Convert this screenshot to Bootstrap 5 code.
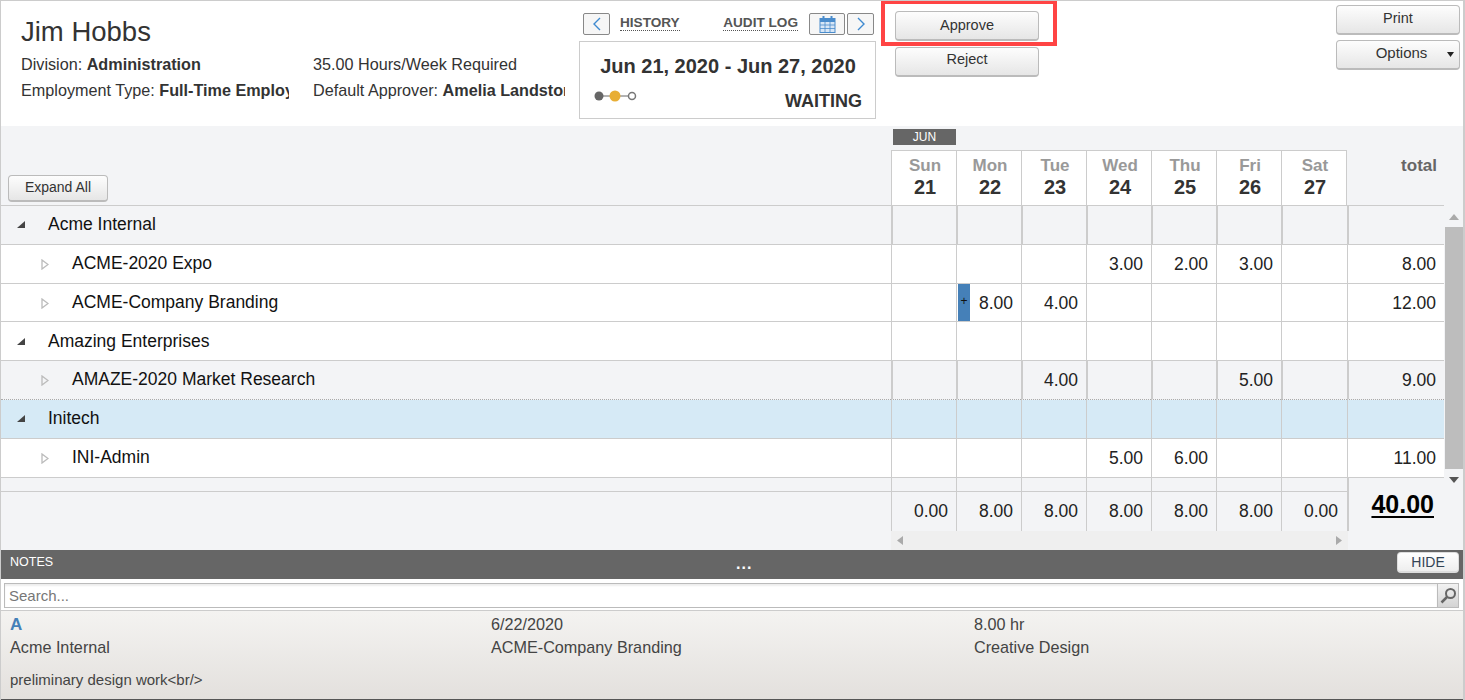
<!DOCTYPE html>
<html lang="en">
<head>
<meta charset="UTF-8" />
<title>Timesheet Approval</title>
<link href="https://cdn.jsdelivr.net/npm/bootstrap@5.3.3/dist/css/bootstrap.min.css" rel="stylesheet" />
<style>
html, body { height: 700px; overflow: hidden; }
body { font-family: "Liberation Sans", Arial, sans-serif; color: #333; background: #fff; font-size: 16.2px; }
.page { width: 1465px; height: 700px; border: 1px solid #ccc; border-width: 1px 2px 0 1px; display: flex; flex-direction: column; position: relative; overflow: hidden; }

/* buttons */
.btn-old { display: block; padding: 0; border: 1px solid #bbb; border-bottom-width: 2px; border-radius: 4px; background: linear-gradient(#fdfdfd, #e6e6e6); color: #333; font-size: 14.5px; line-height: 1; text-align: center; }
.btn-nav { width: 27px; height: 22px; border: 1px solid #888; border-radius: 2px; background: #f6f6f6; padding: 0; display: flex; align-items: center; justify-content: center; }
.cal { width: 36px; margin: 0 2px 0 11px; }

/* top header */
.top { height: 125px; flex: none; }
.who { width: 578px; padding: 15px 0 0 20px; }
.who h1 { font-size: 27.5px; font-weight: 400; line-height: 32px; margin: 0 0 3px; color: #333; }
.who .line { height: 26px; line-height: 26px; white-space: nowrap; overflow: hidden; }
.who .c1 { width: 268px; margin-right: 24px; }
.who .c2 { width: 252px; }
.period { width: 297px; padding-top: 12px; }
.period-nav { height: 22px; padding: 0 2px 0 4px; margin-bottom: 6px; }
.period-link { font-size: 13.6px; font-weight: 700; color: #555; border-bottom: 1px dotted #555; line-height: 15px; margin-top: -2px; }
.period-first { margin-left: 10px; }
.period-box { height: 78px; border: 1px solid #ccc; padding: 11px 13px 0 14px; }
.period-date { font-size: 20px; font-weight: 700; text-align: center; line-height: 26px; margin-bottom: 8px; }
.period-state { font-size: 18px; font-weight: 700; line-height: 22px; margin-top: 3px; }
.period-box svg { margin-top: 3px; }
.actions { width: 144px; margin-left: 19px; padding-top: 10px; }
.actions .btn-old { height: 30px; margin-bottom: 6px; }
.actions .btn-old:last-child { padding-bottom: 4px; }
.tools { width: 124px; padding-top: 4px; margin-left: auto; margin-right: 3px; }
.tools .btn-old { height: 30px; margin-bottom: 5px; padding-bottom: 2px; }
.tools .btn-opt { padding: 0 0 4px 7px; font-size: 15px; }
.opt-caret { right: 5px; top: 11px; }
.redbox { position: absolute; left: 880px; top: -1px; width: 176px; height: 46px; border: 4px solid #f44; pointer-events: none; }

/* sheet */
.sheet { background: #f3f4f6; flex: none; }
.grid { table-layout: fixed; border-collapse: separate; border-spacing: 0; width: 1443px; margin: 0; }
.c-name { width: 890px; }
.c-day { width: 65px; }
.c-sat { width: 66px; }
.grid td { position: relative; box-sizing: border-box; height: 39px; border-bottom: 1px solid #ccc; border-left: 1px solid #ccc; text-align: right; padding: 1px 8px 0 0; font-size: 17.5px; color: #222; vertical-align: middle; }
.grid td.name { border-left: 0; text-align: left; padding: 0 0 1px; color: #111; }
.grid tr.short td { height: 38px; }
.grid tr.white td { background: #fff; }
.grid tr.white.group td.name { padding: 1px 0 0; }
.grid tr.soft td { background: #f3f4f6; }
.grid tr.blue td { background: #d6eaf6; }
.grid tr.dots td { border-bottom: 1px dotted #aaa; }
.grid tr.thick td:not(.name) { border-left-width: 2px; }
.name .in { display: flex; align-items: center; gap: 23px; }
.name .in svg { flex: none; }
.group .in { padding-left: 16px; }
.task .in { padding-left: 40px; }
.task .in svg { margin-top: 2px; }
.head-table td { border: 0; background: transparent; vertical-align: bottom; text-align: center; padding: 0; }
.head-top td { height: 24px !important; border: 0 !important; vertical-align: top; padding: 3px 0 0 !important; }
.jun { margin-left: 2px; width: 63px; height: 16px; background: #666; color: #fff; font-size: 12px; line-height: 17px; text-align: center; }
.head-days td { height: 56px !important; border-bottom: 1px solid #ccc !important; padding: 0 !important; text-align: center !important; }
.head-days td.day { background: #fff !important; border-top: 1px solid #ccc; border-left: 1px solid #ccc !important; vertical-align: top; padding-left: 2px !important; }
.head-days td.day.last { border-right: 1px solid #ccc; }
.day b { display: block; font-size: 17px; color: #999; line-height: 20px; margin-top: 5px; }
.day strong { display: block; font-size: 20px; color: #333; line-height: 22px; }
.head-days .expand { text-align: left !important; vertical-align: bottom; padding: 0 0 3px 7px !important; }
.expand .btn-old { width: 100px; height: 27px; font-size: 14px; padding-bottom: 3px; }
.head-days td.total { vertical-align: top; text-align: right !important; padding: 3px 7px 0 0 !important; font-size: 17px; font-weight: 700; color: #666; }
.plus { position: absolute; left: 1px; top: 0; width: 12px; height: 37px; background: #4580b8; color: #111; font-size: 12px; line-height: 35px; text-align: center; }
.vbar { left: 1444px; top: 205px; width: 18px; background: #f3f4f6; height: 285px; flex: none; }
.vbar .thumb { height: 242px; background: #bdbdbd; }
.vbar .ar { height: 22px; display: flex; align-items: center; justify-content: center; }
.vbar .ar:first-child { height: 21px; }
.stub td { height: 14px !important; background: #f3f4f6; padding: 0 !important; }
.grid td.sum { border-left-width: 2px; border-bottom: 0; background: #f3f4f6; }
.stub td.grand { font-size: 25px; font-weight: 700; color: #000; text-decoration: underline; text-underline-offset: 3px; text-decoration-thickness: 2px; padding: 8px 10px 0 0 !important; vertical-align: top; }
.grid tr.tot td { border-bottom: 0; padding-top: 0; }
.grid tr.tot td:nth-child(8) { padding-right: 9px; }
.hbar { height: 19px; width: 457px; margin-left: 890px; background: #efefef; padding: 0 6px; }

/* notes */
.notes-bar { height: 29px; background: #666; color: #fff; flex: none; padding: 0 4px 4px 9px; position: relative; }
.notes-bar .lbl { font-size: 12.5px; }
.notes-bar .more { position: absolute; left: 735px; top: 2px; font-size: 16px; font-weight: 700; letter-spacing: 1px; }
.notes-bar .btn-old { width: 62px; height: 21px; font-size: 14px; background: linear-gradient(#fff, #eee); color: #345; border-color: #ddd; }
.search { height: 32px; flex: none; padding: 4px 4px 3px 3px; border-bottom: 1px solid #ccc; }
.search input { height: 25px; border: 1px solid #bbb; border-right: 0; border-radius: 0; padding: 0 4px; font-size: 15px; font-family: inherit; color: #777; box-shadow: inset 0 2px 2px #eee; }
.search input::placeholder { color: #777; }
.search .go { width: 22px; height: 25px; border: 1px solid #bbb; background: linear-gradient(#f2f2f2, #d4d4d4); display: flex; align-items: center; justify-content: center; }
.note { flex: 1; background: linear-gradient(#f4f3f1, #e3e0dd); padding: 2px 0 0 9px; border-bottom: 1px solid #555; }
.note .cols { display: grid; grid-template-columns: 481px 483px 1fr; line-height: 23px; color: #444; font-size: 16.2px; }
.note .who-a { color: #4580b8; font-weight: 700; font-size: 17px; }
.note .txt { font-size: 15px; line-height: 20px; margin-top: 11px; color: #444; }
</style>
</head>
<body class="m-0">
<div class="page">

  <!-- employee header -->
  <div class="top d-flex">
    <div class="who">
      <h1>Jim Hobbs</h1>
      <div class="d-flex">
        <div class="line c1">Division: <b>Administration</b></div>
        <div class="line c2">35.00 Hours/Week Required</div>
      </div>
      <div class="d-flex">
        <div class="line c1">Employment Type: <b>Full-Time Employee</b></div>
        <div class="line c2">Default Approver: <b>Amelia Landston</b></div>
      </div>
    </div>

    <div class="period">
      <div class="period-nav d-flex align-items-center">
        <button class="btn-nav" type="button"><svg width="10" height="14" viewBox="0 0 10 14"><path d="M8 1 2 7l6 6" fill="none" stroke="#3f8ad0" stroke-width="1.4"/></svg></button>
        <span class="period-link period-first">HISTORY</span>
        <span class="period-link ms-auto">AUDIT LOG</span>
        <button class="btn-nav cal" type="button"><svg width="17" height="17" viewBox="0 0 17 17"><rect x="1" y="2.5" width="15" height="14" fill="#d7e6f6" stroke="#4a8ccc"/><rect x="1" y="2.5" width="15" height="3.5" fill="#4a8ccc"/><path d="M4.5 0v4M12.5 0v4" stroke="#4a8ccc" stroke-width="2"/><path d="M1 9h15M1 12.500h15M6 6v10M11 6v10" stroke="#4a8ccc" stroke-width=".8"/></svg></button>
        <button class="btn-nav" type="button"><svg width="10" height="14" viewBox="0 0 10 14"><path d="m2 1 6 6-6 6" fill="none" stroke="#3f8ad0" stroke-width="1.4"/></svg></button>
      </div>
      <div class="period-box">
        <div class="period-date">Jun 21, 2020 - Jun 27, 2020</div>
        <div class="d-flex justify-content-between align-items-start">
          <svg width="44" height="12" viewBox="0 0 44 12"><path d="M5 6h32" stroke="#666"/><circle cx="5" cy="6" r="4.500" fill="#666"/><circle cx="21" cy="6" r="5.500" fill="#e8ae35"/><circle cx="38" cy="6" r="3.500" fill="#fff" stroke="#777" stroke-width="1.500"/></svg>
          <span class="period-state">WAITING</span>
        </div>
      </div>
    </div>

    <div class="actions">
      <button class="btn-old w-100" type="button">Approve</button>
      <button class="btn-old w-100" type="button">Reject</button>
    </div>

    <div class="tools">
      <button class="btn-old w-100" type="button">Print</button>
      <button class="btn-old btn-opt w-100 position-relative" type="button">Options<svg class="position-absolute opt-caret" width="7" height="5" viewBox="0 0 7 5"><path d="M0 0h7L3.500 5z" fill="#222"/></svg></button>
    </div>
  </div>
  <div class="redbox"></div>

  <!-- timesheet -->
  <div class="sheet">
    <table class="grid head-table">
      <colgroup><col class="c-name"><col span="6" class="c-day"><col class="c-sat"><col></colgroup>
      <tr class="head-top"><td></td><td><div class="jun">JUN</div></td><td colspan="7"></td></tr>
      <tr class="head-days">
        <td class="expand"><button class="btn-old" type="button">Expand All</button></td>
        <td class="day"><b>Sun</b><strong>21</strong></td>
        <td class="day"><b>Mon</b><strong>22</strong></td>
        <td class="day"><b>Tue</b><strong>23</strong></td>
        <td class="day"><b>Wed</b><strong>24</strong></td>
        <td class="day"><b>Thu</b><strong>25</strong></td>
        <td class="day"><b>Fri</b><strong>26</strong></td>
        <td class="day last"><b>Sat</b><strong>27</strong></td>
        <td class="total">total</td>
      </tr>
    </table>

    <table class="grid">
      <colgroup><col class="c-name"><col span="6" class="c-day"><col class="c-sat"><col></colgroup>
      <tr class="soft thick group"><td class="name"><div class="in"><svg width="8" height="8" viewBox="0 0 8 8"><path d="M8 0v7H0z" fill="#444"/></svg>Acme Internal</div></td><td></td><td></td><td></td><td></td><td></td><td></td><td></td><td></td></tr>
      <tr class="white task"><td class="name"><div class="in"><svg width="8" height="11" viewBox="0 0 8 11"><path d="M1 1v9l6-4.500z" fill="#fff" stroke="#bbb" stroke-width="1.300"/></svg>ACME-2020 Expo</div></td><td></td><td></td><td></td><td>3.00</td><td>2.00</td><td>3.00</td><td></td><td>8.00</td></tr>
      <tr class="white task short"><td class="name"><div class="in"><svg width="8" height="11" viewBox="0 0 8 11"><path d="M1 1v9l6-4.500z" fill="#fff" stroke="#bbb" stroke-width="1.300"/></svg>ACME-Company Branding</div></td><td></td><td><span class="plus">+</span>8.00</td><td>4.00</td><td></td><td></td><td></td><td></td><td>12.00</td></tr>
      <tr class="white group"><td class="name"><div class="in"><svg width="8" height="8" viewBox="0 0 8 8"><path d="M8 0v7H0z" fill="#444"/></svg>Amazing Enterprises</div></td><td></td><td></td><td></td><td></td><td></td><td></td><td></td><td></td></tr>
      <tr class="soft thick task dots"><td class="name"><div class="in"><svg width="8" height="11" viewBox="0 0 8 11"><path d="M1 1v9l6-4.500z" fill="#f3f4f6" stroke="#bbb" stroke-width="1.300"/></svg>AMAZE-2020 Market Research</div></td><td></td><td></td><td>4.00</td><td></td><td></td><td>5.00</td><td></td><td>9.00</td></tr>
      <tr class="blue group"><td class="name"><div class="in"><svg width="8" height="8" viewBox="0 0 8 8"><path d="M8 0v7H0z" fill="#444"/></svg>Initech</div></td><td></td><td></td><td></td><td></td><td></td><td></td><td></td><td></td></tr>
      <tr class="white task"><td class="name"><div class="in"><svg width="8" height="11" viewBox="0 0 8 11"><path d="M1 1v9l6-4.500z" fill="#fff" stroke="#bbb" stroke-width="1.300"/></svg>INI-Admin</div></td><td></td><td></td><td></td><td>5.00</td><td>6.00</td><td></td><td></td><td>11.00</td></tr>
      <tr class="stub"><td class="name"></td><td></td><td></td><td></td><td></td><td></td><td></td><td></td><td class="sum grand" rowspan="2">40.00</td></tr>
      <tr class="tot"><td class="name"></td><td>0.00</td><td>8.00</td><td>8.00</td><td>8.00</td><td>8.00</td><td>8.00</td><td>0.00</td></tr>
    </table>

    <div class="hbar d-flex justify-content-between align-items-center">
      <svg width="6" height="9" viewBox="0 0 6 9"><path d="M6 0v9L0 4.500z" fill="#aaa"/></svg>
      <svg width="6" height="9" viewBox="0 0 6 9"><path d="M0 0v9l6-4.500z" fill="#aaa"/></svg>
    </div>
  </div>

  <!-- notes -->
  <div class="notes-bar d-flex justify-content-between align-items-center mt-auto">
    <span class="lbl">NOTES</span>
    <span class="more">...</span>
    <button class="btn-old" type="button">HIDE</button>
  </div>
  <div class="search d-flex">
    <input class="form-control flex-grow-1" type="text" placeholder="Search..." />
    <div class="go"><svg width="17" height="17" viewBox="0 0 17 17"><circle cx="10.500" cy="6.500" r="4.500" fill="none" stroke="#666" stroke-width="2"/><path d="M7 10l-5.500 5.500" stroke="#666" stroke-width="2.500"/></svg></div>
  </div>
  <div class="note">
    <div class="cols">
      <div class="who-a">A</div><div>6/22/2020</div><div>8.00 hr</div>
      <div>Acme Internal</div><div>ACME-Company Branding</div><div>Creative Design</div>
    </div>
    <div class="txt">preliminary design work&lt;br/&gt;</div>
  </div>

  <!-- vertical scrollbar of the rows -->
  <div class="vbar position-absolute">
    <div class="ar"><svg width="10" height="6" viewBox="0 0 10 6"><path d="M5 0l5 6H0z" fill="#aaa"/></svg></div>
    <div class="thumb"></div>
    <div class="ar"><svg width="10" height="6" viewBox="0 0 10 6"><path d="M0 0h10L5 6z" fill="#555"/></svg></div>
  </div>
</div>
<script src="https://cdn.jsdelivr.net/npm/bootstrap@5.3.3/dist/js/bootstrap.bundle.min.js"></script>
</body>
</html>
